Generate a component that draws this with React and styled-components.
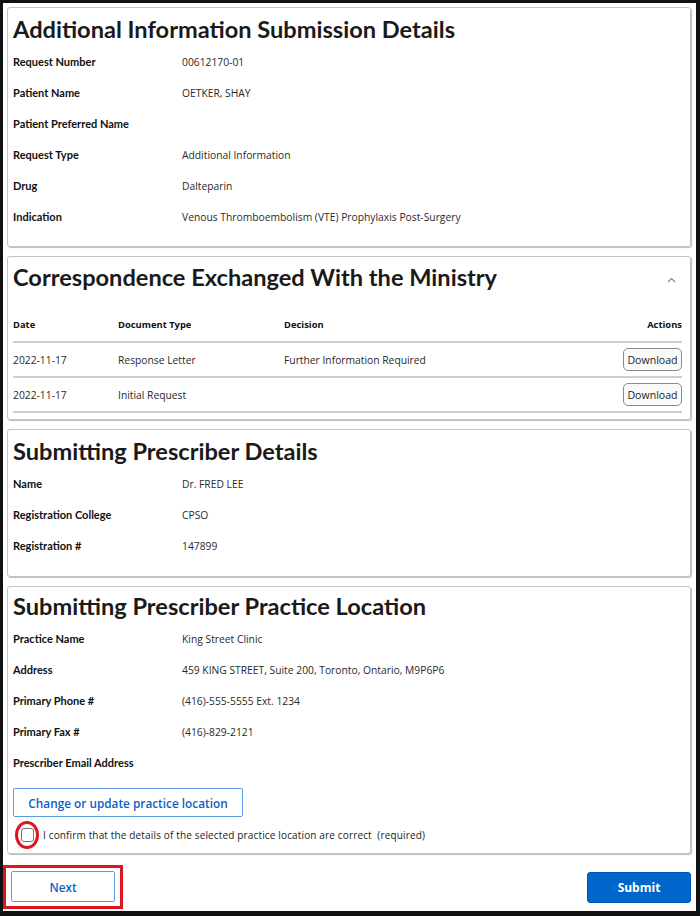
import React from "react"
import styled, { createGlobalStyle } from "styled-components"

const GlobalStyle = createGlobalStyle`
    html, body {
        margin: 0;
        padding: 0;
        background: #111;
    }
    * {
        box-sizing: border-box;
    }
`

const Frame = styled.div`
    width: 700px;
    height: 916px;
    border-style: solid;
    border-color: #111;
    border-width: 3px 4px 5px 3px;
    background: #fff;
    display: flex;
    flex-direction: column;
    font-family: "Open Sans", "Liberation Sans", sans-serif;
    color: #222;
`

const Stack = styled.main`
    display: flex;
    flex-direction: column;
    gap: 9px;
    padding: 4px 5px 0 4px;
`

const Card = styled.section`
    border: 1px solid #c4c4c4;
    border-radius: 3px;
    box-shadow: 1px 1px 1px #bdbdbd;
    padding: ${(p) => p.$pad || "5px 8px 14px 5px"};
`

const TitleRow = styled.div`
    display: flex;
    align-items: center;
    justify-content: space-between;
`

const Title = styled.h2`
    margin: 0;
    font-family: Lato, "Liberation Sans", sans-serif;
    font-weight: 700;
    font-size: 23.6px;
    line-height: 33px;
    color: #1a1a1a;
`

const Chevron = styled.svg`
    width: 9px;
    height: 6px;
    margin-right: 6px;
    margin-top: 4px;
`

const Fields = styled.dl`
    margin: 0;
    display: grid;
    grid-template-columns: 169px 1fr;
    grid-auto-rows: 31px;
    align-items: center;
`

const Label = styled.dt`
    font-family: Lato, "Liberation Sans", sans-serif;
    font-weight: 700;
    font-size: 11px;
    color: #111;
`

const Value = styled.dd`
    margin: 0;
    font-size: 10.3px;
    color: #2a2a2a;
`

const Table = styled.div`
    margin-top: 13px;
`

const TableRow = styled.div`
    display: grid;
    grid-template-columns: 105px 166px 1fr auto;
    align-items: center;
    height: ${(p) => (p.$head ? "36px" : "35px")};
    border-bottom: 2px solid #cfcfcf;
    font-size: ${(p) => (p.$head ? "9.4px" : "10.3px")};
    font-weight: ${(p) => (p.$head ? 700 : 400)};
    color: ${(p) => (p.$head ? "#111" : "#2a2a2a")};
`

const RightCell = styled.div`
    justify-self: end;
`

const DownloadButton = styled.button`
    font-family: "Open Sans", "Liberation Sans", sans-serif;
    font-size: 10.6px;
    color: #222;
    background: #fafafa;
    border: 1px solid #8a8a8a;
    border-radius: 5px;
    height: 23px;
    width: 59px;
    padding: 0;
`

const OutlineButton = styled.button`
    font-family: "Open Sans", "Liberation Sans", sans-serif;
    font-weight: 600;
    font-size: 11.8px;
    color: #0b5fc5;
    background: #fff;
    border: 1px solid #5c9ce6;
    border-radius: 2px;
    height: ${(p) => p.$h || "29px"};
    width: ${(p) => p.$w};
    padding: 0;
`

const PrimaryButton = styled.button`
    font-family: "Open Sans", "Liberation Sans", sans-serif;
    font-weight: 700;
    font-size: 12px;
    color: #fff;
    background: #0066cc;
    border: 1px solid #0058b3;
    border-radius: 3px;
    height: 31px;
    width: 104px;
`

const ChangeWrap = styled.div`
    margin-top: 10px;
    display: flex;
`

const ConfirmRow = styled.label`
    display: flex;
    align-items: center;
    gap: 4px;
    margin-top: 4px;
    font-size: 10px;
    letter-spacing: 0.15px;
    color: #222;
`

const RedRing = styled.span`
    display: inline-flex;
    align-items: center;
    justify-content: center;
    width: 24px;
    height: 28px;
    border: 3px solid #e0141e;
    border-radius: 50%;
    margin-left: 2px;
`

const Box = styled.span`
    width: 13px;
    height: 14px;
    border: 1px solid #777;
    border-radius: 3px;
    background: #fff;
`

const Footer = styled.footer`
    display: flex;
    align-items: center;
    justify-content: space-between;
    margin-top: 11px;
    padding-right: 5px;
`

const Highlight = styled.div`
    display: flex;
    border: 3px solid #e0141e;
    padding: 3px 5px 4px 5px;
`

const requestFields = [
    ["Request Number", "00612170-01"],
    ["Patient Name", "OETKER, SHAY"],
    ["Patient Preferred Name", ""],
    ["Request Type", "Additional Information"],
    ["Drug", "Dalteparin"],
    ["Indication", "Venous Thromboembolism (VTE) Prophylaxis Post-Surgery"],
]

const prescriberFields = [
    ["Name", "Dr. FRED LEE"],
    ["Registration College", "CPSO"],
    ["Registration #", "147899"],
]

const locationFields = [
    ["Practice Name", "King Street Clinic"],
    ["Address", "459 KING STREET, Suite 200, Toronto, Ontario, M9P6P6"],
    ["Primary Phone #", "(416)-555-5555 Ext. 1234"],
    ["Primary Fax #", "(416)-829-2121"],
    ["Prescriber Email Address", ""],
]

const letters = [
    { date: "2022-11-17", type: "Response Letter", decision: "Further Information Required" },
    { date: "2022-11-17", type: "Initial Request", decision: "" },
]

function FieldList({ items }) {
    return (
        <Fields>
            {items.map(([label, value]) => (
                <React.Fragment key={label}>
                    <Label>{label}</Label>
                    <Value>{value}</Value>
                </React.Fragment>
            ))}
        </Fields>
    )
}

export default function App() {
    return (
        <>
            <GlobalStyle />
            <Frame>
                <Stack>
                    <Card>
                        <Title>Additional Information Submission Details</Title>
                        <FieldList items={requestFields} />
                    </Card>

                    <Card $pad="4px 8px 6px 5px">
                        <TitleRow>
                            <Title>Correspondence Exchanged With the Ministry</Title>
                            <Chevron viewBox="0 0 9 6">
                                <polyline points="1,5 4.5,1.5 8,5" fill="none" stroke="#888" strokeWidth="1.1" />
                            </Chevron>
                        </TitleRow>
                        <Table>
                            <TableRow $head>
                                <div>Date</div>
                                <div>Document Type</div>
                                <div>Decision</div>
                                <RightCell>Actions</RightCell>
                            </TableRow>
                            {letters.map((l) => (
                                <TableRow key={l.type}>
                                    <div>{l.date}</div>
                                    <div>{l.type}</div>
                                    <div>{l.decision}</div>
                                    <RightCell>
                                        <DownloadButton>Download</DownloadButton>
                                    </RightCell>
                                </TableRow>
                            ))}
                        </Table>
                    </Card>

                    <Card $pad="5px 8px 15px 5px">
                        <Title>Submitting Prescriber Details</Title>
                        <FieldList items={prescriberFields} />
                    </Card>

                    <Card $pad="3px 8px 4px 5px">
                        <Title>Submitting Prescriber Practice Location</Title>
                        <FieldList items={locationFields} />
                        <ChangeWrap>
                            <OutlineButton $w="230px">Change or update practice location</OutlineButton>
                        </ChangeWrap>
                        <ConfirmRow>
                            <RedRing>
                                <Box />
                            </RedRing>
                            I confirm that the details of the selected practice location are correct&nbsp; (required)
                        </ConfirmRow>
                    </Card>
                </Stack>

                <Footer>
                    <Highlight>
                        <OutlineButton $w="104px" $h="31px">Next</OutlineButton>
                    </Highlight>
                    <PrimaryButton>Submit</PrimaryButton>
                </Footer>
            </Frame>
        </>
    )
}
